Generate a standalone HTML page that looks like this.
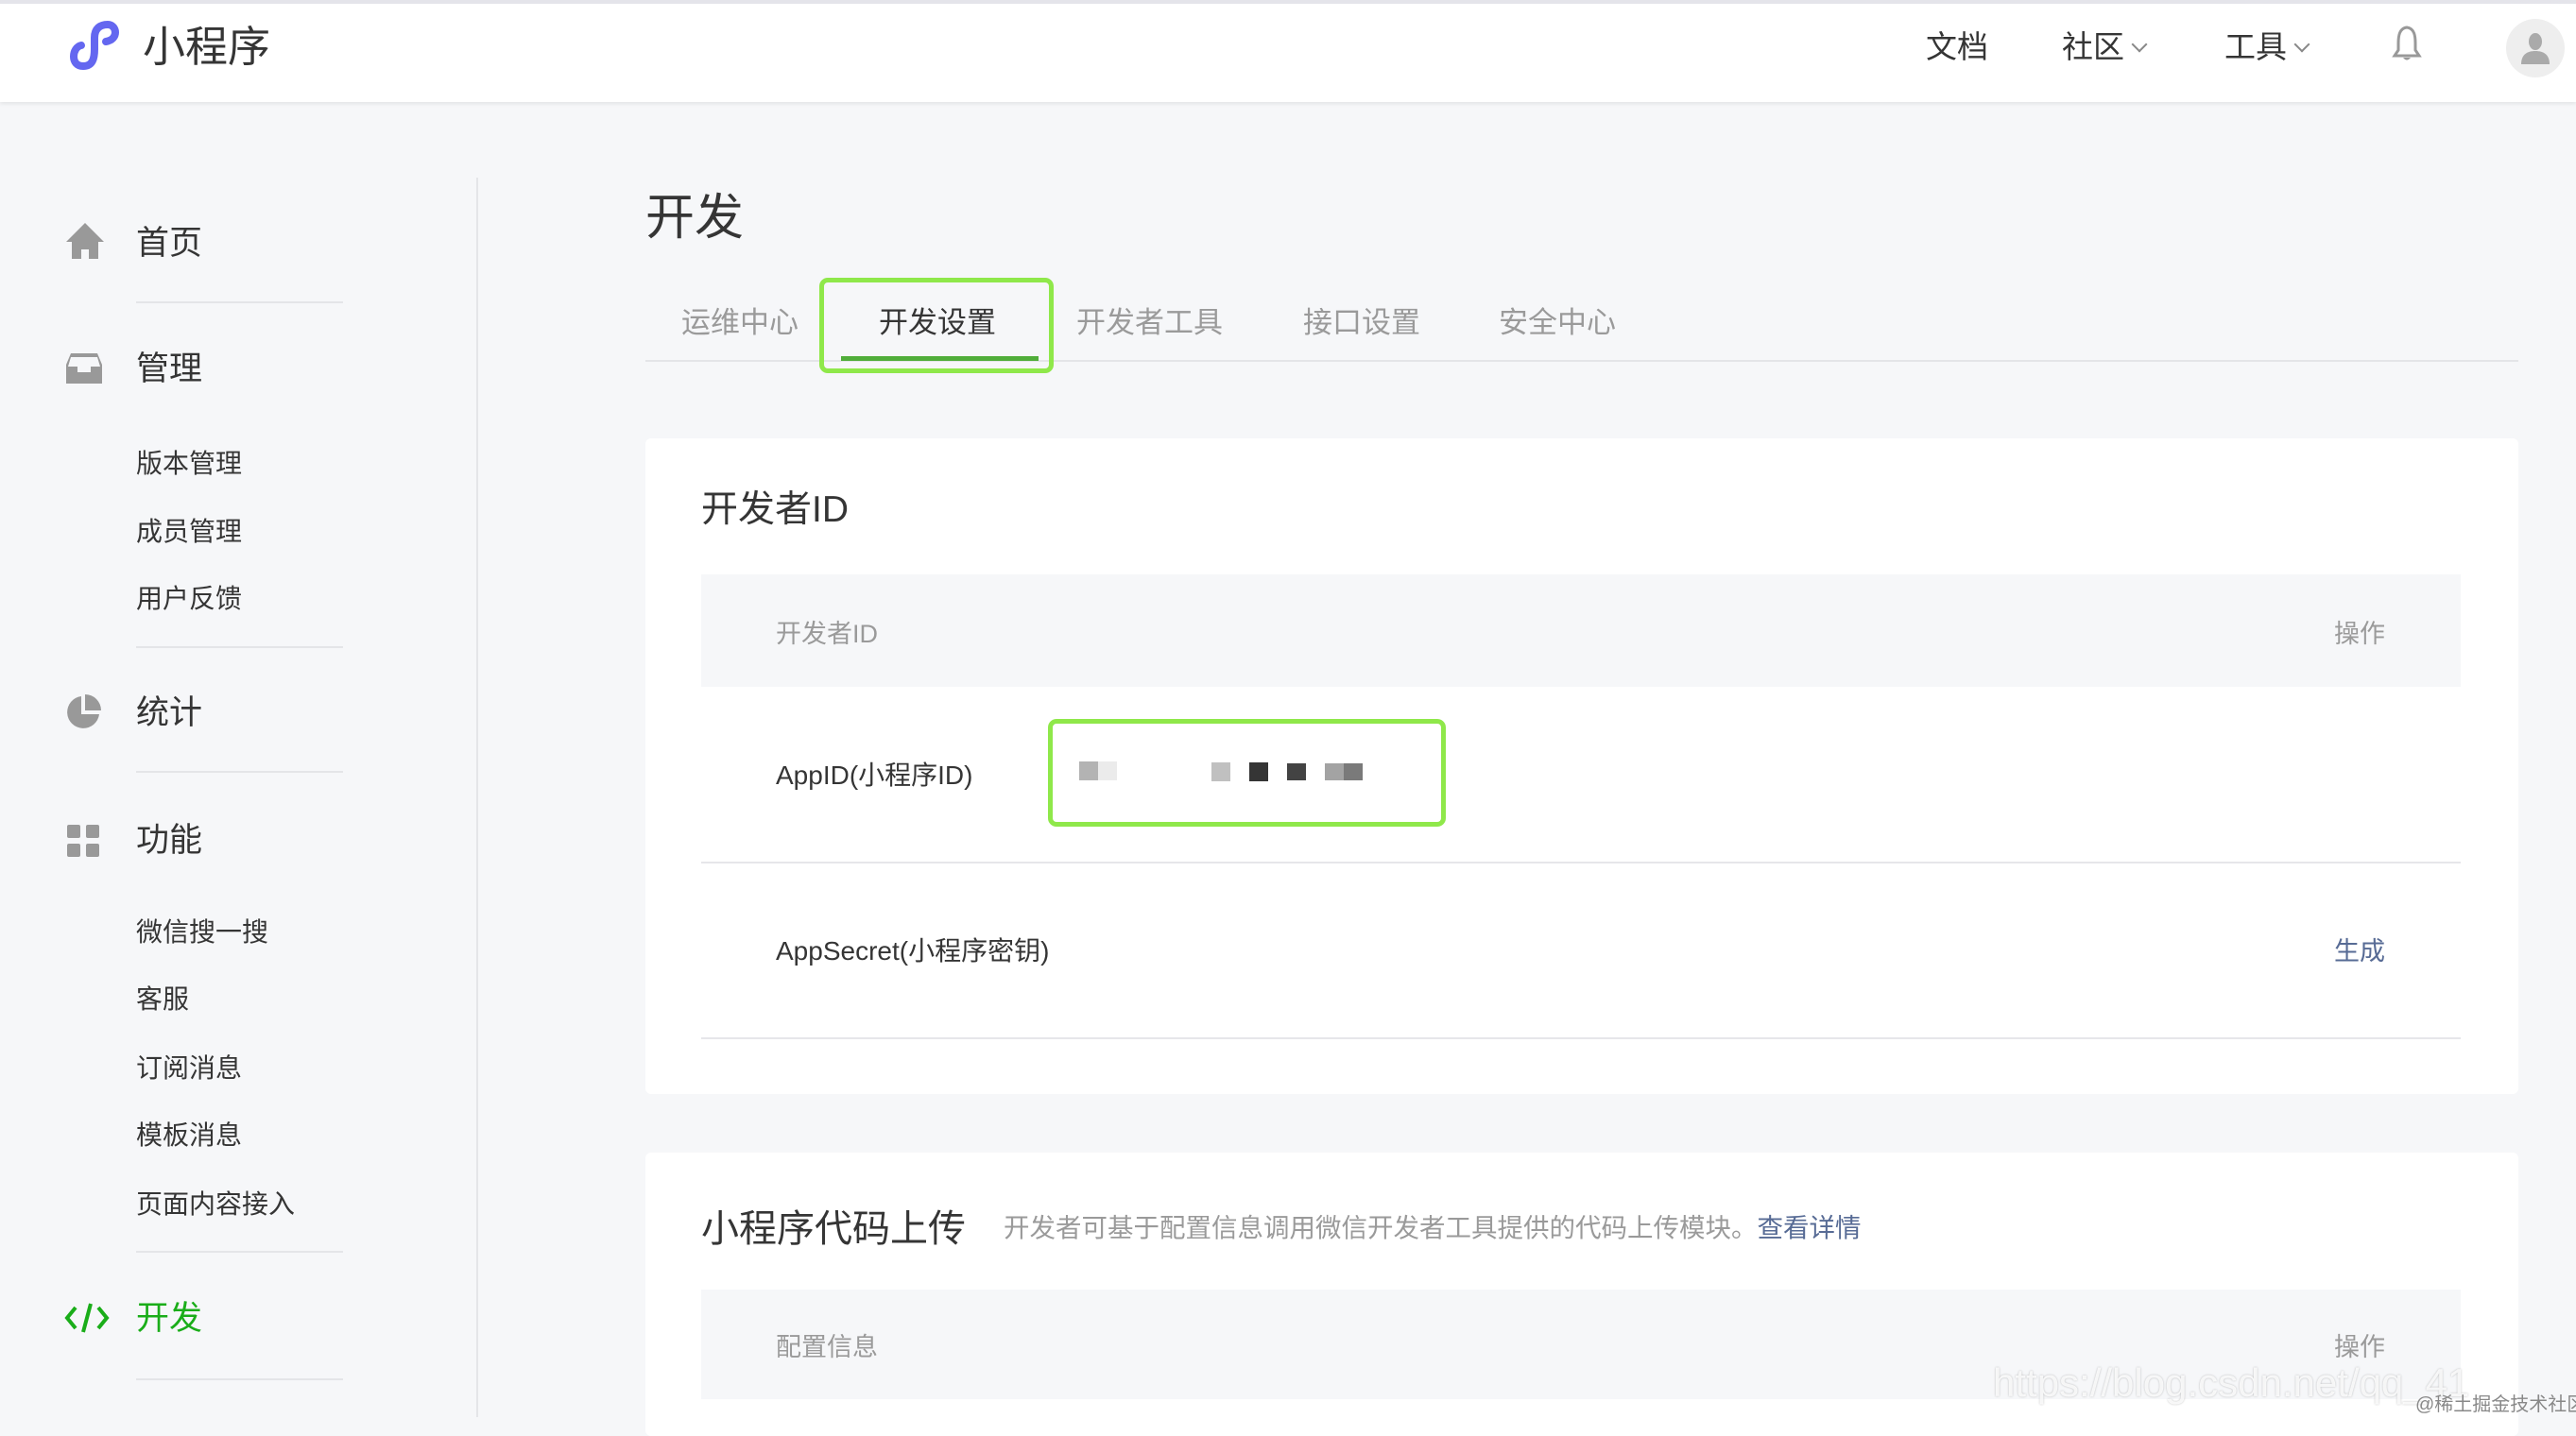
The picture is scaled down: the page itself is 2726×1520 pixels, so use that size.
<!DOCTYPE html>
<html><head><meta charset="utf-8"><style>
*{margin:0;padding:0;box-sizing:border-box}
body{width:2726px;height:1500px;background:#f6f7f9;font-family:"Liberation Sans","Noto Sans CJK SC",sans-serif;position:relative;overflow:hidden;color:#353535}
.a{position:absolute;white-space:nowrap}
.hdr{position:absolute;left:0;top:0;width:2726px;height:108px;background:#fff;border-top:4px solid #e4e4ea;box-shadow:0 2px 4px rgba(0,0,0,.08)}
.nav{font-size:33px;color:#353535;top:23px}
.chev{display:inline-block;width:12px;height:12px;border-right:2px solid #888;border-bottom:2px solid #888;transform:rotate(45deg);margin-left:10px;vertical-align:8px}
.mi{font-size:35px;color:#353535;left:144px}
.si{font-size:28px;color:#353535;left:144px}
.dv{position:absolute;left:144px;width:219px;height:2px;background:#e4e5e8}
.ic{position:absolute;left:68px}
.tab{font-size:31px;color:#9a9a9a;top:316px}
.card{position:absolute;left:683px;width:1982px;background:#fff;border-radius:6px}
.th{position:absolute;left:742px;width:1862px;background:#f6f7f9}
.g{color:#9a9a9a;font-size:27px}
.t{color:#353535;font-size:27px}
.sq{position:absolute;height:20px;width:20px}
</style></head><body>
<div class="hdr"></div>
<svg class="a" style="left:68px;top:18px" width="68" height="58" viewBox="0 0 68 58"><path d="M18 30 C8 32 6 52 20 52 C30 52 32 44 32 34 L32 22 C32 12 38 8 46 8 C56 8 58 24 44 26" fill="none" stroke="#6467f0" stroke-width="8" stroke-linecap="round"/></svg>
<div class="a" style="left:151px;top:13px;font-size:45px;color:#353535">小程序</div>
<div class="a nav" style="left:2038px">文档</div>
<div class="a nav" style="left:2182px">社区<span class="chev"></span></div>
<div class="a nav" style="left:2354px">工具<span class="chev"></span></div>
<svg class="a" style="left:2529px;top:26px" width="36" height="40" viewBox="0 0 36 40"><path d="M18 3 C10 4 9 12 9 20 L9 27 L5 33 L31 33 L27 27 L27 20 C27 12 26 4 18 3Z" fill="none" stroke="#999" stroke-width="3"/><path d="M14 35 Q18 40 22 35" fill="#999"/></svg>
<div class="a" style="left:2652px;top:20px;width:62px;height:62px;border-radius:50%;background:#eee"></div>
<svg class="a" style="left:2664px;top:32px" width="38" height="38" viewBox="0 0 38 38"><ellipse cx="19" cy="12" rx="7" ry="9" fill="#aaa"/><path d="M4 36 C4 26 10 22 19 22 C28 22 34 26 34 36Z" fill="#aaa"/></svg>

<div class="a" style="left:504px;top:188px;width:2px;height:1312px;background:#e4e5e8"></div>
<svg class="ic" style="top:234px" width="44" height="42" viewBox="0 0 44 42"><path d="M22 2 L2 22 L8 22 L8 40 L18 40 L18 30 L26 30 L26 40 L36 40 L36 22 L42 22Z" fill="#999"/></svg>
<div class="a mi" style="top:229px">首页</div>
<div class="dv" style="top:319px"></div>
<svg class="ic" style="top:372px" width="42" height="36" viewBox="0 0 42 36"><path d="M7 2 L35 2 L40 14 L40 34 L2 34 L2 14Z M7 6 L4 16 L14 16 L14 22 L28 22 L28 16 L38 16 L35 6Z" fill="#999" fill-rule="evenodd"/></svg>
<div class="a mi" style="top:362px">管理</div>
<div class="a si" style="top:469px">版本管理</div>
<div class="a si" style="top:541px">成员管理</div>
<div class="a si" style="top:612px">用户反馈</div>
<div class="dv" style="top:684px"></div>
<svg class="ic" style="top:734px" width="40" height="40" viewBox="0 0 40 40"><path d="M18 3 A17 17 0 1 0 37 22 L18 22Z" fill="#999"/><path d="M22 1 L22 18 L39 18 A17 17 0 0 0 22 1Z" fill="#999"/></svg>
<div class="a mi" style="top:726px">统计</div>
<div class="dv" style="top:816px"></div>
<svg class="ic" style="top:870px" width="40" height="40" viewBox="0 0 40 40"><rect x="3" y="3" width="14" height="14" rx="2" fill="#999"/><rect x="23" y="3" width="14" height="14" rx="2" fill="#999"/><rect x="3" y="23" width="14" height="14" rx="2" fill="#999"/><rect x="23" y="23" width="14" height="14" rx="2" fill="#999"/></svg>
<div class="a mi" style="top:861px">功能</div>
<div class="a si" style="top:965px">微信搜一搜</div>
<div class="a si" style="top:1036px">客服</div>
<div class="a si" style="top:1109px">订阅消息</div>
<div class="a si" style="top:1180px">模板消息</div>
<div class="a si" style="top:1253px">页面内容接入</div>
<div class="dv" style="top:1324px"></div>
<svg class="ic" style="top:1378px" width="48" height="34" viewBox="0 0 48 34"><path d="M12 6 L3 17 L12 28 M36 6 L45 17 L36 28 M28 2 L20 32" fill="none" stroke="#1aad19" stroke-width="4"/></svg>
<div class="a mi" style="top:1367px;color:#1aad19">开发</div>
<div class="dv" style="top:1459px"></div>

<div class="a" style="left:683px;top:188px;font-size:52px;color:#353535">开发</div>
<div class="a tab" style="left:721px">运维中心</div>
<div class="a tab" style="left:930px;color:#353535">开发设置</div>
<div class="a tab" style="left:1139px">开发者工具</div>
<div class="a tab" style="left:1379px">接口设置</div>
<div class="a tab" style="left:1586px">安全中心</div>
<div class="a" style="left:683px;top:381px;width:1982px;height:2px;background:#e4e5e8"></div>
<div class="a" style="left:890px;top:377px;width:209px;height:5px;background:#50ad3a"></div>
<div class="a" style="left:867px;top:294px;width:248px;height:101px;border:5px solid #8fe84a;border-radius:9px"></div>

<div class="card" style="top:464px;height:694px"></div>
<div class="a" style="left:742px;top:508px;font-size:39px;color:#353535">开发者ID</div>
<div class="th" style="top:608px;height:119px"></div>
<div class="a g" style="left:821px;top:649px">开发者ID</div>
<div class="a g" style="left:2470px;top:649px">操作</div>
<div class="a t" style="left:821px;top:799px;font-size:28px">AppID(小程序ID)</div>
<div class="a" style="left:742px;top:912px;width:1862px;height:2px;background:#e6e6ea"></div>
<div class="a" style="left:1109px;top:761px;width:421px;height:114px;border:5px solid #8fe84a;border-radius:9px"></div>
<div class="sq" style="left:1142px;top:806px;background:#b3b3b3"></div>
<div class="sq" style="left:1162px;top:806px;background:#ebebeb"></div>
<div class="sq" style="left:1282px;top:807px;background:#c0c0c0"></div>
<div class="sq" style="left:1322px;top:807px;background:#353535"></div>
<div class="sq" style="left:1362px;top:808px;height:18px;background:#434343"></div>
<div class="sq" style="left:1402px;top:808px;height:18px;background:#a3a3a3"></div>
<div class="sq" style="left:1422px;top:808px;height:18px;background:#7a7a7a"></div>
<div class="a t" style="left:821px;top:985px;font-size:28px">AppSecret(小程序密钥)</div>
<div class="a" style="left:2470px;top:985px;font-size:27px;color:#576b95">生成</div>
<div class="a" style="left:742px;top:1098px;width:1862px;height:2px;background:#e6e6ea"></div>

<div class="card" style="top:1220px;height:300px"></div>
<div class="a" style="left:742px;top:1268px;font-size:40px;color:#353535">小程序代码上传</div>
<div class="a g" style="left:1062px;top:1277px;font-size:27.5px">开发者可基于配置信息调用微信开发者工具提供的代码上传模块。<span style="color:#576b95">查看详情</span></div>
<div class="th" style="top:1365px;height:116px"></div>
<div class="a g" style="left:821px;top:1404px">配置信息</div>
<div class="a g" style="left:2470px;top:1404px">操作</div>

<div class="a" style="left:2109px;top:1440px;font-size:42px;color:rgba(255,255,255,.85);text-shadow:0 0 2px rgba(0,0,0,.25)">https://blog.csdn.net/qq_41</div>
<div class="a" style="left:2556px;top:1470px;font-size:20px;color:#888">@稀土掘金技术社区</div>
</body></html>
